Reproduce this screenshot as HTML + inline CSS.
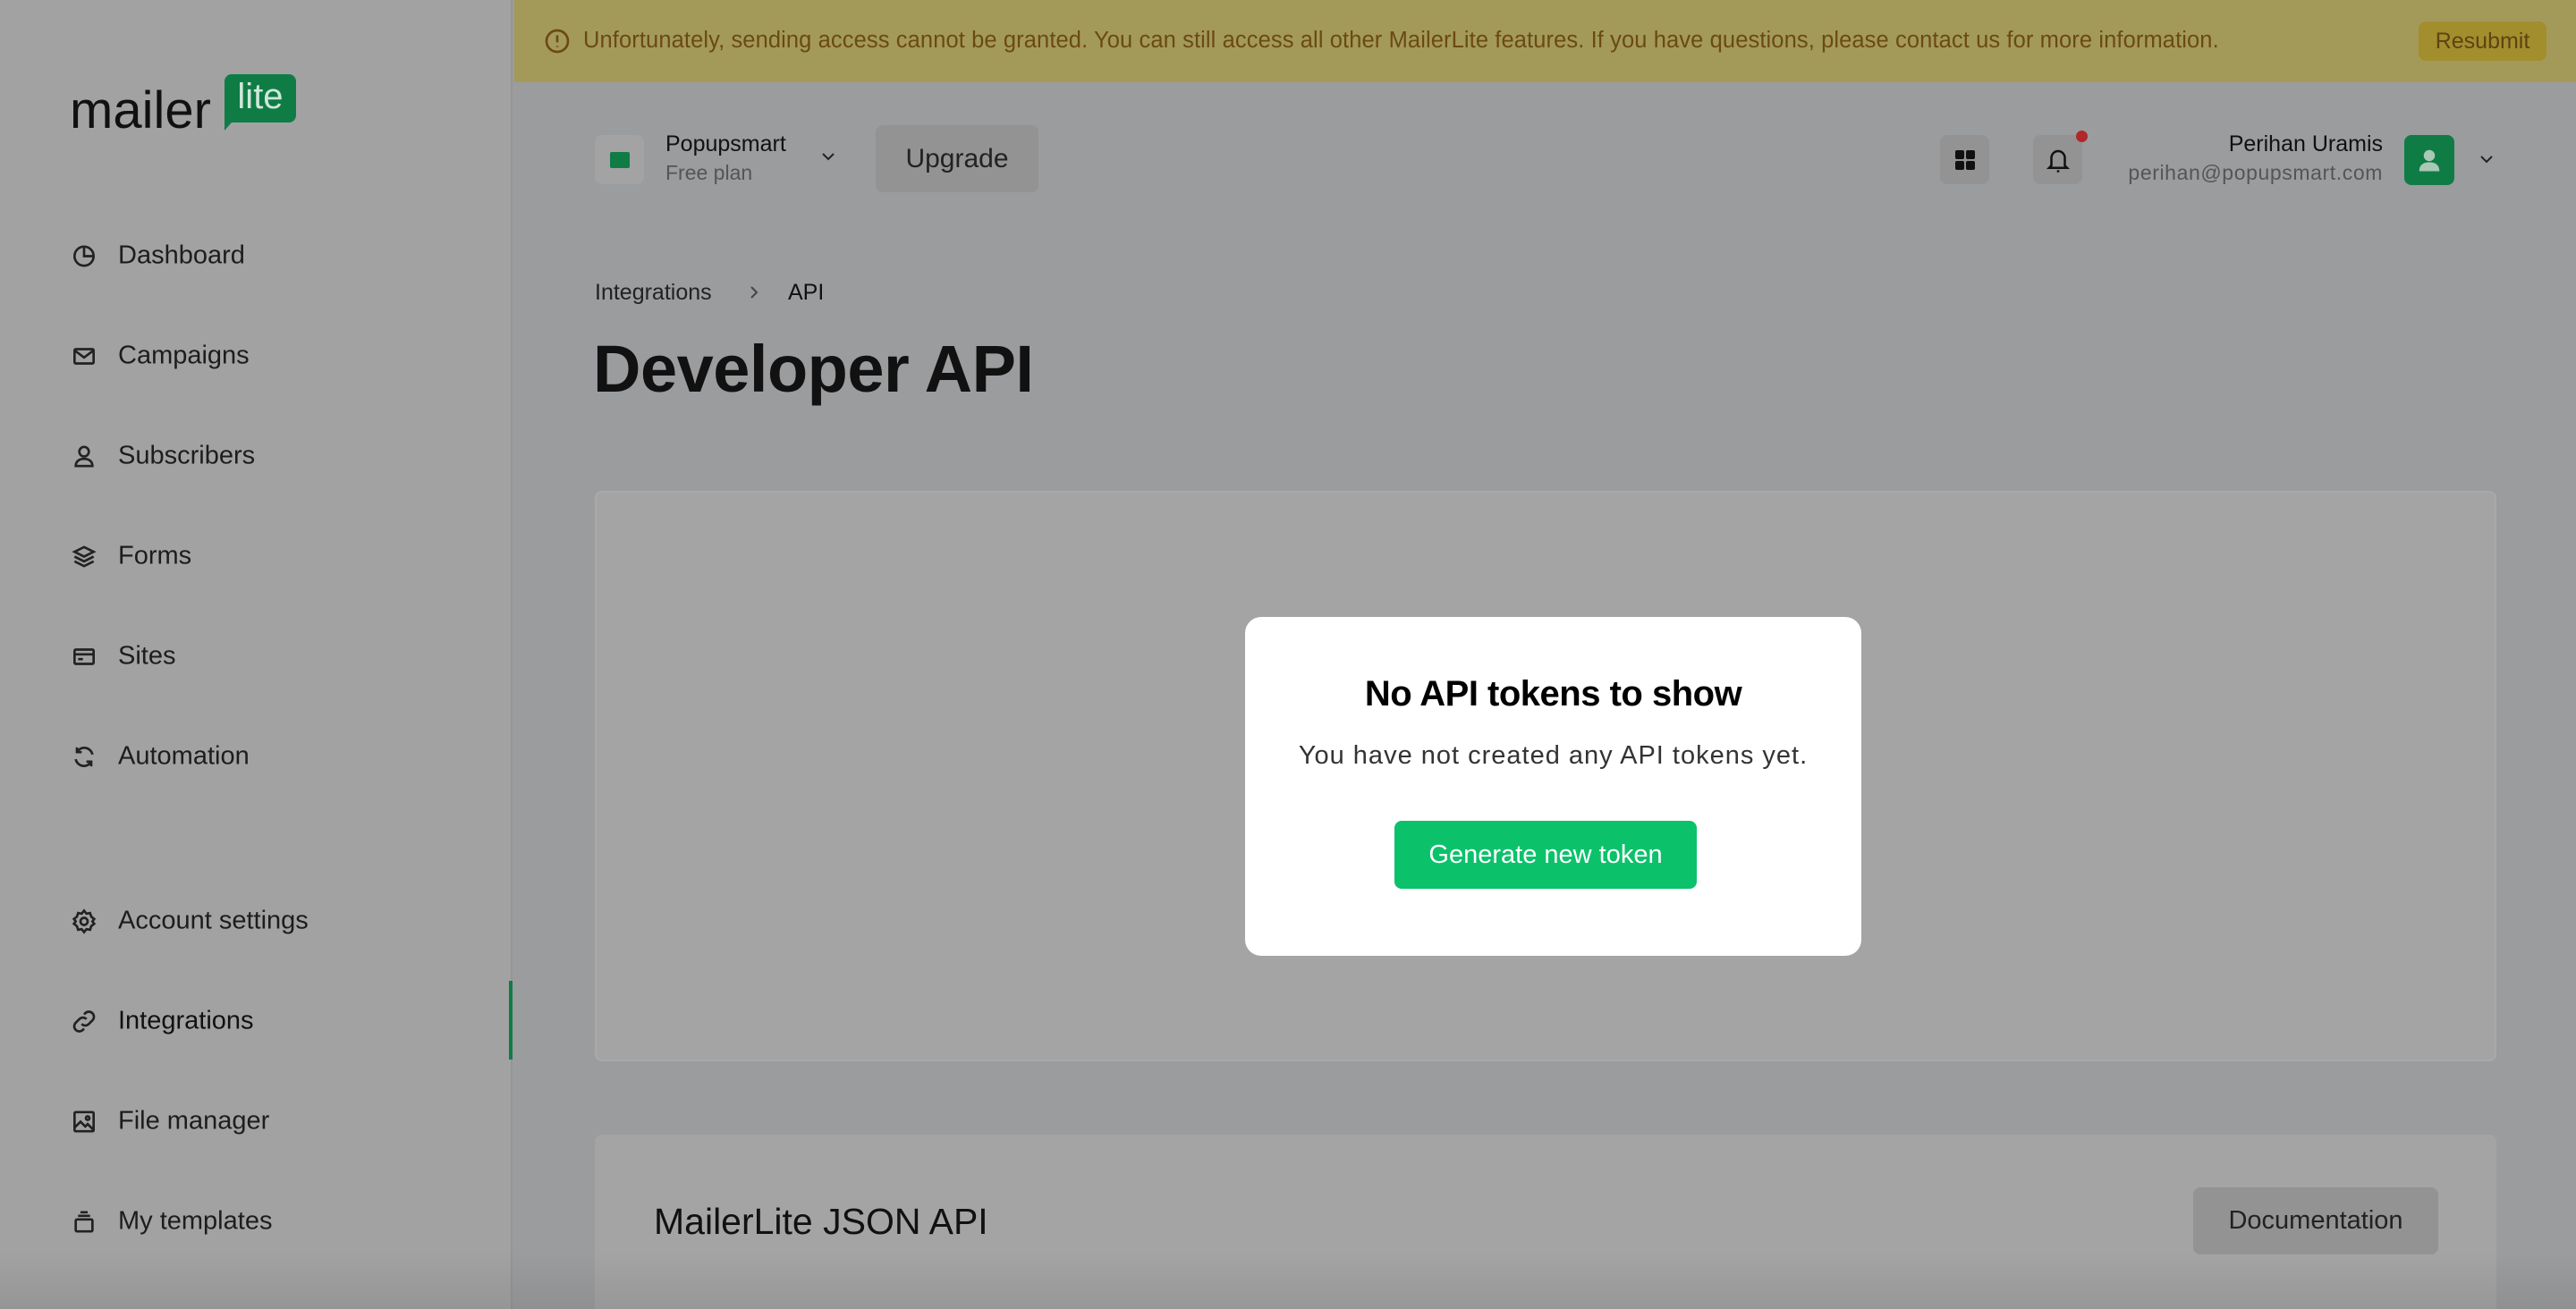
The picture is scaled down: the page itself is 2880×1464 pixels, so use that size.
<!DOCTYPE html>
<html style="overflow:hidden;height:1464px"><head><meta charset="utf-8"><style>
*{margin:0;padding:0;box-sizing:border-box}
body{width:2880px;height:1464px;overflow:hidden;position:relative;background:#9b9c9e;font-family:"Liberation Sans",sans-serif;color:#111}
.a{position:absolute}
#side{left:0;top:0;width:573px;height:1464px;background:#a2a2a2;border-right:2px solid #959595}
.nav{position:absolute;left:78px;font-size:29px;color:#1d1d1d;display:flex;align-items:center;transform:translateY(-50%)}
.nav svg{width:32px;height:32px;margin-right:22px;fill:none;stroke:#222;stroke-width:2}
#banner{left:575px;top:0;width:2305px;height:92px;background:#a39a5a}
.btn{position:absolute;display:flex;align-items:center;justify-content:center;border-radius:8px}
</style></head><body>
<div id="side" class="a">
  <div class="a" style="left:78px;top:90px;font-size:58px;letter-spacing:0px;color:#111">mailer</div>
  <div class="a" style="left:251px;top:83px;width:80px;height:54px;background:#0f7c46;border-radius:8px;color:#cfe7d9;font-size:40px;text-align:center;line-height:50px">lite</div>
  <div class="a" style="left:251px;top:130px;width:0;height:0;border-left:14px solid #0f7c46;border-bottom:16px solid transparent"></div>

  <div class="nav" style="top:286px"><svg viewBox="0 0 24 24"><circle cx="12" cy="12" r="8"/><path d="M12 4v8h8"/></svg>Dashboard</div>
  <div class="nav" style="top:398px"><svg viewBox="0 0 24 24"><rect x="4" y="6" width="16" height="12" rx="1"/><path d="M4 7l8 6 8-6"/></svg>Campaigns</div>
  <div class="nav" style="top:510px"><svg viewBox="0 0 24 24"><circle cx="12" cy="8" r="4"/><path d="M5 20c0-4 3-6 7-6s7 2 7 6z"/></svg>Subscribers</div>
  <div class="nav" style="top:622px"><svg viewBox="0 0 24 24"><path d="M12 4l8 4-8 4-8-4z M4 12l8 4 8-4 M4 16l8 4 8-4"/></svg>Forms</div>
  <div class="nav" style="top:734px"><svg viewBox="0 0 24 24"><rect x="4" y="6" width="16" height="12" rx="1"/><path d="M4 10h16M7 14h4"/></svg>Sites</div>
  <div class="nav" style="top:846px"><svg viewBox="0 0 24 24"><path d="M19 10a7 7 0 0 0-13-2M5 14a7 7 0 0 0 13 2M6 4v4h4M18 20v-4h-4"/></svg>Automation</div>
  <div class="nav" style="top:1030px"><svg viewBox="0 0 24 24"><circle cx="12" cy="12" r="3"/><path d="M12 3l2 2.5 3-.5 1 3 2.5 2-1.5 2 1.5 2-2.5 2-1 3-3-.5-2 2.5-2-2.5-3 .5-1-3-2.5-2 1.5-2-1.5-2 2.5-2 1-3 3 .5z"/></svg>Account settings</div>
  <div class="nav" style="top:1142px;color:#111"><svg viewBox="0 0 24 24"><path d="M10 14a4 4 0 0 0 6 0l3-3a4 4 0 0 0-6-6l-1 1M14 10a4 4 0 0 0-6 0l-3 3a4 4 0 0 0 6 6l1-1"/></svg>Integrations</div>
  <div class="nav" style="top:1254px"><svg viewBox="0 0 24 24"><rect x="4" y="4" width="16" height="16" rx="1"/><path d="M4 17l5-5 4 4 2-2 5 5"/><circle cx="15" cy="9" r="1.5"/></svg>File manager</div>
  <div class="nav" style="top:1366px"><svg viewBox="0 0 24 24"><rect x="5" y="10" width="14" height="10" rx="1"/><path d="M7 7h10M9 4h6"/></svg>My templates</div>
  <div class="a" style="left:569px;top:1097px;width:4px;height:88px;background:#0f7c46"></div>
</div>

<div id="banner" class="a">
  <svg class="a" style="left:32px;top:30px" width="32" height="32" viewBox="0 0 24 24" fill="none" stroke="#6b4a12" stroke-width="2"><circle cx="12" cy="12" r="9"/><path d="M12 7v6M12 16v1"/></svg>
  <div class="a" style="left:77px;top:31px;font-size:25.5px;color:#6b4a12;white-space:nowrap;letter-spacing:0.1px">Unfortunately, sending access cannot be granted. You can still access all other MailerLite features. If you have questions, please contact us for more information.</div>
  <div class="btn" style="left:2129px;top:24px;width:143px;height:44px;background:#a38e2e;color:#5c4412;font-size:25px">Resubmit</div>
</div>

<div class="btn" style="left:665px;top:151px;width:55px;height:55px;background:#a3a3a3"><div style="width:22px;height:18px;background:#0f7c46;border-radius:2px"></div></div>
<div class="a" style="left:744px;top:147px;font-size:25px;color:#111">Popupsmart</div>
<div class="a" style="left:744px;top:180px;font-size:23px;color:#555">Free plan</div>
<svg class="a" style="left:916px;top:170px" width="20" height="16" viewBox="0 0 20 16" fill="none" stroke="#222" stroke-width="2"><path d="M4 5l6 6-6 6" transform="rotate(90 10 8) translate(0 -3)"/></svg>
<div class="btn" style="left:979px;top:140px;width:182px;height:75px;background:#939394;font-size:30px;color:#222">Upgrade</div>

<div class="btn" style="left:2169px;top:151px;width:55px;height:55px;background:#939394"><svg width="26" height="26" viewBox="0 0 26 26" fill="#111"><rect x="2" y="2" width="10" height="10" rx="2"/><rect x="14" y="2" width="10" height="10" rx="2"/><rect x="2" y="14" width="10" height="10" rx="2"/><rect x="14" y="14" width="10" height="10" rx="2"/></svg></div>
<div class="btn" style="left:2273px;top:151px;width:55px;height:55px;background:#939394"><svg width="30" height="34" viewBox="0 0 24 26" fill="none" stroke="#111" stroke-width="2"><path d="M6 18V11a6 6 0 0 1 12 0v7l2 2H4z"/><path d="M11 23h2"/></svg></div>
<div class="a" style="left:2321px;top:146px;width:13px;height:13px;border-radius:50%;background:#b0282a"></div>
<div class="a" style="right:216px;top:147px;font-size:25px;color:#111">Perihan Uramis</div>
<div class="a" style="right:216px;top:180px;font-size:23px;color:#555;letter-spacing:0.6px">perihan@popupsmart.com</div>
<div class="btn" style="left:2688px;top:151px;width:56px;height:56px;background:#0f7c46"><svg width="30" height="30" viewBox="0 0 24 24" fill="#a9c8b6"><circle cx="12" cy="8" r="5"/><path d="M3 22c0-6 4-8 9-8s9 2 9 8z"/></svg></div>
<svg class="a" style="left:2770px;top:170px" width="20" height="16" viewBox="0 0 20 16" fill="none" stroke="#222" stroke-width="2"><path d="M4 5l6 6 6-6"/></svg>

<div class="a" style="left:665px;top:313px;font-size:25px;color:#222">Integrations</div>
<svg class="a" style="left:835px;top:317px" width="16" height="20" viewBox="0 0 16 20" fill="none" stroke="#444" stroke-width="2"><path d="M5 4l6 6-6 6"/></svg>
<div class="a" style="left:881px;top:313px;font-size:25px;color:#111">API</div>
<div class="a" style="left:663px;top:370px;font-size:74px;font-weight:bold;color:#111;letter-spacing:-0.5px">Developer API</div>

<div class="a" style="left:665px;top:549px;width:2126px;height:638px;background:#a4a4a4;border:2px solid #a9a9a9;border-radius:8px"></div>
<div class="a" style="left:665px;top:1269px;width:2126px;height:195px;background:#a4a4a4;border-radius:8px 8px 0 0"></div>
<div class="a" style="left:731px;top:1343px;font-size:41px;color:#111">MailerLite JSON API</div>
<div class="btn" style="left:2452px;top:1328px;width:274px;height:75px;background:#939394;font-size:29px;color:#222">Documentation</div>
<div class="a" style="left:0;top:1400px;width:2880px;height:64px;background:linear-gradient(rgba(0,0,0,0),rgba(0,0,0,0.08))"></div>

<div class="a" style="left:1392px;top:690px;width:689px;height:379px;background:#fff;border-radius:18px">
  <div class="a" style="left:0;width:100%;top:64px;text-align:center;font-size:40px;font-weight:bold;color:#000;letter-spacing:-0.5px">No API tokens to show</div>
  <div class="a" style="left:0;width:100%;top:139px;text-align:center;font-size:29px;color:#333;letter-spacing:1px">You have not created any API tokens yet.</div>
  <div class="btn" style="left:167px;top:228px;width:338px;height:76px;background:#0bc26b;color:#fff;font-size:29px">Generate new token</div>
</div>
</body></html>
